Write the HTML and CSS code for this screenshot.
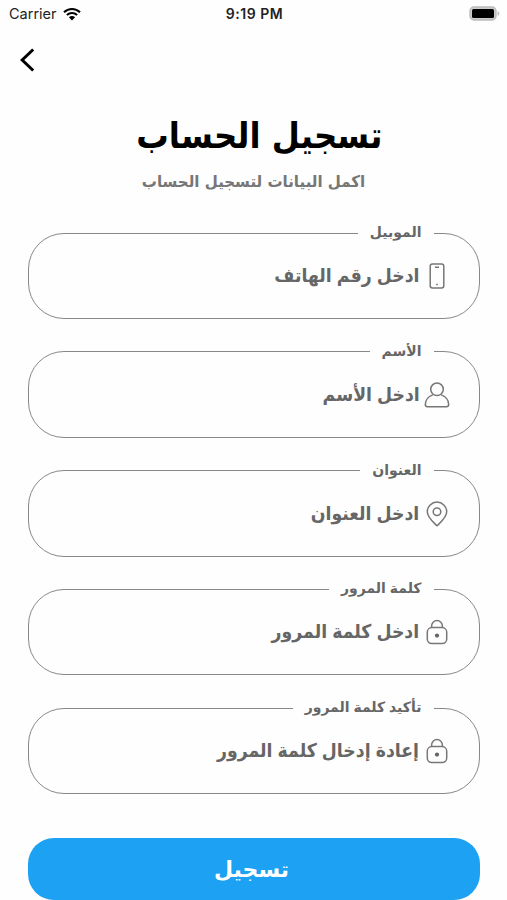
FILE: index.html
```html
<!DOCTYPE html>
<html lang="ar" dir="rtl">
  <head>
    <meta charset="UTF-8">
    <meta name="viewport" content="width=device-width, initial-scale=1.0">
    <title>تسجيل الحساب</title>
    <link rel="stylesheet" href="styles.css">
  </head>
  <body>
    <div class="status-bar" dir="ltr">
      <div class="carrier">
        <span>Carrier</span>
        <svg class="wifi" viewBox="0 0 18 14">
          <path d="M1 5.2a11.5 11.5 0 0 1 16 0M3.9 8a7.4 7.4 0 0 1 10.2 0" fill="none" stroke="#000" stroke-width="2.1"/>
          <path d="M9 13.4 5.9 10.3a4.4 4.4 0 0 1 6.2 0z"/>
        </svg>
      </div>
      <div class="time">9:19 PM</div>
      <div class="battery-wrapper">
        <svg class="battery" viewBox="0 0 31 15">
          <rect x="1" y="1" width="26" height="13" rx="4" fill="#ccc" stroke="#bbb" stroke-width="1.4"/>
          <rect x="3" y="3" width="22" height="9" rx="1.5"/>
          <path d="M28.6 5.2c2.2.5 2.2 4.1 0 4.6z" fill="#bbb"/>
        </svg>
      </div>
    </div>

    <div class="nav" dir="ltr">
      <svg class="back" viewBox="0 0 16 24">
        <path d="M13.2 1.5 2.2 12l11 10.5" fill="none" stroke="#000" stroke-width="3"/>
      </svg>
    </div>

    <div class="header">
      <h1>تسجيل الحساب</h1>
      <p>اكمل البيانات لتسجيل الحساب</p>
    </div>

    <form class="form">
      <fieldset class="field">
        <legend>الموبيل</legend>
        <svg class="icon" viewBox="0 0 26 26">
          <rect x="6.2" y="1" width="13.6" height="24" rx="2.2"/>
          <path d="M11 4.2h4M12.2 21.4h1.6"/>
        </svg>
        <span class="placeholder">ادخل رقم الهاتف</span>
      </fieldset>

      <fieldset class="field">
        <legend>الأسم</legend>
        <svg class="icon" viewBox="0 0 26 26">
          <circle cx="13" cy="7.3" r="6.3"/>
          <path d="M8.8 12.9C4.8 14.3 1.3 18 1.3 22.6c0 1.4.8 2.2 2.2 2.2h19c1.4 0 2.2-.8 2.2-2.2 0-4.6-3.5-8.3-7.5-9.7"/>
        </svg>
        <span class="placeholder">ادخل الأسم</span>
      </fieldset>

      <fieldset class="field">
        <legend>العنوان</legend>
        <svg class="icon" viewBox="0 0 26 26">
          <path d="M13 24.8C9 20.8 3.3 16.5 3.3 10.8a9.7 9.7 0 0 1 19.4 0c0 5.7-5.7 10-9.7 14z"/>
          <circle cx="13" cy="10.8" r="3.8"/>
        </svg>
        <span class="placeholder">ادخل العنوان</span>
      </fieldset>

      <fieldset class="field">
        <legend>كلمة المرور</legend>
        <svg class="icon" viewBox="0 0 26 26">
          <rect x="3.3" y="8.6" width="19.4" height="16" rx="4.5"/>
          <path d="M7.6 8.6V7a5.4 5.4 0 0 1 10.8 0v1.6"/>
          <circle class="dot" cx="13" cy="16.6" r="2.1"/>
        </svg>
        <span class="placeholder">ادخل كلمة المرور</span>
      </fieldset>

      <fieldset class="field">
        <legend>تأكيد كلمة المرور</legend>
        <svg class="icon" viewBox="0 0 26 26">
          <rect x="3.3" y="8.6" width="19.4" height="16" rx="4.5"/>
          <path d="M7.6 8.6V7a5.4 5.4 0 0 1 10.8 0v1.6"/>
          <circle class="dot" cx="13" cy="16.6" r="2.1"/>
        </svg>
        <span class="placeholder">إعادة إدخال كلمة المرور</span>
      </fieldset>

      <button type="button" class="btn-primary">تسجيل</button>
    </form>
  </body>
</html>
```
FILE: styles.css
```css
* {
  box-sizing: border-box;
  margin: 0;
  padding: 0;
}

body {
  height: 900px;
  overflow: hidden;
  font-family: 'DejaVu Sans', sans-serif;
  font-weight: bold;
  color: #666;
  background: #fefefe;
}

.status-bar {
  display: grid;
  grid-template-columns: 1fr auto 1fr;
  align-items: center;
  height: 27px;
  padding: 0 7px 0 9px;
  font-family: Inter, sans-serif;
  font-size: 14.5px;
  font-weight: 400;
  color: #222;
}

.carrier {
  display: flex;
  align-items: center;
  gap: 6px;
}

.wifi {
  width: 18px;
  height: 14px;
}

.time {
  font-size: 14px;
  font-weight: 600;
  letter-spacing: 0.5px;
}

.battery-wrapper {
  display: flex;
  justify-content: flex-end;
}

.battery {
  width: 31px;
  height: 15px;
}

.nav {
  height: 66px;
  padding: 21px 20px 0;
}

.back {
  display: block;
  width: 16px;
  height: 24px;
}

.header {
  height: 130px;
  padding: 20px 0 0;
  text-align: center;
  white-space: nowrap;
}

.header h1 {
  padding-left: 13px;
  font-size: 36px;
  line-height: 46px;
  color: #000;
  transform: scaleX(0.9);
}

.header p {
  margin-top: 13px;
  font-size: 16px;
  line-height: 20px;
  color: #777;
  transform: scaleX(0.94);
}

.form {
  display: flex;
  flex-direction: column;
  gap: 22.8px;
  padding: 0 27.5px;
}

.field {
  display: flex;
  align-items: flex-start;
  gap: 4px;
  min-width: 0;
  height: 96px;
  padding: 20px 29px 0;
  border: 1.5px solid #888;
  border-radius: 36px;
}

.field legend {
  height: 20px;
  margin-right: 16px;
  padding: 0 12px;
  font-size: 14px;
  line-height: 18px;
  word-spacing: -1px;
  white-space: nowrap;
}

.icon {
  width: 26px;
  height: 26px;
  fill: none;
  stroke: #777;
  stroke-width: 1.5;
}

.icon .dot {
  fill: #666;
  stroke: none;
}

/* squeezed a little, the bold Arabic glyphs are wide */
.placeholder {
  font-size: 19px;
  line-height: 25px;
  word-spacing: -1px;
  white-space: nowrap;
  transform: scaleX(0.91);
  transform-origin: right;
}

.btn-primary {
  height: 62px;
  margin-top: 21px;
  padding: 2px 4px 0 0;
  border: none;
  border-radius: 26px;
  font-family: inherit;
  font-size: 22px;
  font-weight: bold;
  color: #fff;
  background: #1da1f2;
}
```
